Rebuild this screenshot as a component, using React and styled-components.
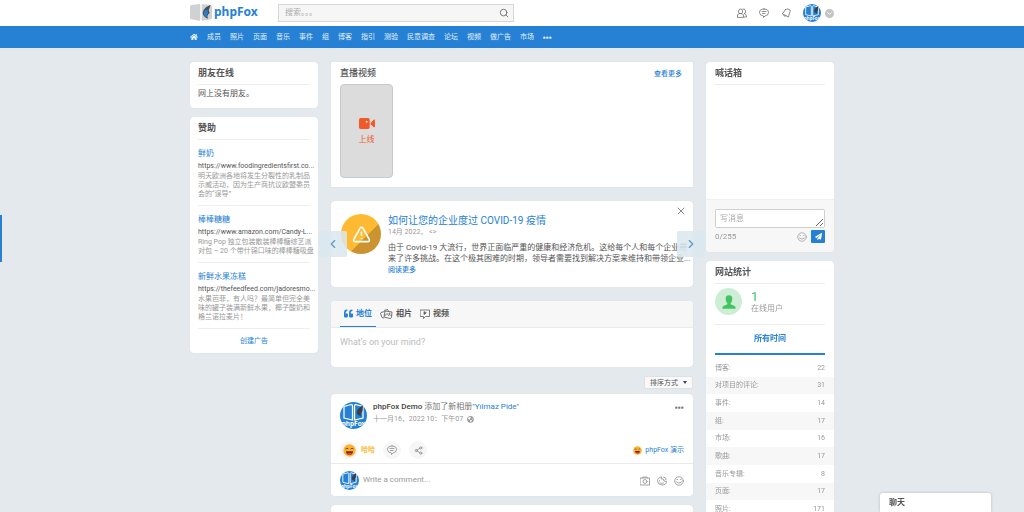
import React, { useState } from "react";
import styled, { createGlobalStyle, css } from "styled-components";
import { Search, TriangleAlert, ChevronLeft, ChevronRight, ChevronDown, X, Share2 } from "lucide-react";
import { FaHome, FaQuoteLeft, FaPaperPlane, FaGlobeAmericas } from "react-icons/fa";

const GlobalStyle = createGlobalStyle`
  * {
    box-sizing: border-box;
  }

  html {
    scrollbar-width: none;
  }

  body {
    margin: 0;
    background: #e3e9ed;
    color: #555;
    font-family: Roboto, "Noto Sans CJK SC", sans-serif;
    font-size: 8px;
    line-height: 10px;
  }

  a {
    color: #2681d5;
    text-decoration: none;
  }

  button,
  input,
  textarea {
    font: inherit;
    color: inherit;
    margin: 0;
    padding: 0;
    border: 0;
    background: none;
    outline: none;
  }

  button {
    cursor: pointer;
  }

  svg {
    display: block;
    flex: none;
  }

  h1, h2, h3, p, ul {
    margin: 0;
    padding: 0;
  }
`;

const Page = styled.div`
  height: 100vh;
  overflow: hidden;
`;

const Container = styled.div`
  display: flex;
  align-items: center;
  width: 100%;
  max-width: 644px;
  margin: 0 auto;
`;

const Header = styled.header`
  display: flex;
  height: 26px;
  background: #fff;
`;

const Logo = styled.a`
  display: flex;
  align-items: center;
  gap: 2px;
  width: 88px;
  font-family: "Noto Sans", sans-serif;
  font-size: 12px;
  font-weight: 700;
  line-height: 16px;
`;

const LogoText = styled.span`
  padding-bottom: 2px;
`;

const SearchBox = styled.form`
  display: flex;
  align-items: center;
  width: 236px;
  height: 18px;
  padding: 0 4px 0 6px;
  border: 1px solid #d6d6d6;
  background: #f6f6f6;
  color: #666;

  input {
    flex: 1;
    min-width: 0;
  }

  input::placeholder {
    color: #aaa;
  }
`;

const HeaderActions = styled.div`
  display: flex;
  align-items: center;
  gap: 12px;
  margin-left: auto;
  color: #666;
`;

const Account = styled.div`
  display: flex;
  align-items: center;
  gap: 4px;
`;

const AccountToggle = styled.button`
  display: flex;
  align-items: center;
  justify-content: center;
  width: 9px;
  height: 9px;
  border-radius: 50%;
  background: #c4c4c4 !important;
  color: #fff !important;
`;

const Nav = styled.nav`
  display: flex;
  height: 22px;
  background: #2681d5;
`;

const NavLink = styled.a`
  margin-right: 9px;
  color: #e4f0fb;
  font-size: 7px;
  white-space: nowrap;
`;

const Main = styled.main`
  display: grid;
  grid-template-columns: 128px minmax(0, 1fr) 128px;
  gap: 13px;
  align-items: start;
  width: 100%;
  max-width: 644px;
  margin: 0 auto;
  padding-top: 14px;
`;

const SideColumn = styled.div`
  display: flex;
  flex-direction: column;
  gap: 9px;
`;

const Card = styled.section`
  border-radius: ${({ $square }) => ($square ? "0" : "4px")};
  background: #fff;
  overflow: hidden;
  box-shadow: 0 0 1px rgba(0, 0, 0, 0.1);
`;

const CardBody = styled.div`
  padding: 0 ${({ $tight }) => ($tight ? "8px" : "9px")};
`;

const CardTitle = styled.h2`
  height: 23px;
  border-bottom: ${({ $plain }) => ($plain ? "0" : "1px solid #eee")};
  font-size: 9px;
  font-weight: ${({ $plain }) => ($plain ? 500 : 700)};
  line-height: 22px;
`;

const EmptyText = styled.p`
  padding: 4px 0 9px;
`;

const Ad = styled.article`
  padding: 8px 0 6px;
  border-bottom: 1px solid #eee;
  white-space: nowrap;
`;

const AdTitle = styled.h3`
  font-size: 8px;
  font-weight: 400;
  line-height: 12px;
`;

const AdUrl = styled.p`
  font-size: 7px;
  line-height: 12px;
`;

const AdText = styled.p`
  color: #999;
  font-size: 7px;
  line-height: 9px;
`;

const Line = styled.span`
  display: block;
`;

const CreateAd = styled.a`
  display: block;
  font-size: 7px;
  line-height: 24px;
  text-align: center;
`;

const LiveCard = styled(Card)`
  padding-bottom: 9px;
`;

const RowBetween = styled.div`
  display: flex;
  align-items: center;
  justify-content: space-between;
`;

const MoreLink = styled.a`
  font-size: 7px;
  font-weight: 500;
  padding-right: 2px;
`;

const LiveButton = styled.button`
  display: flex;
  flex-direction: column;
  align-items: center;
  justify-content: center;
  gap: 6px;
  width: 53px;
  height: 94px;
  margin-top: -1px;
  border: 1px solid #c9c9c9 !important;
  border-radius: 4px;
  background: #dcdcdc !important;
  color: #f05a28 !important;
`;

const Slider = styled.div`
  position: relative;
  margin-top: 14px;
`;

const Slide = styled(Card)`
  display: flex;
  gap: 7px;
  height: 86px;
  padding: 13px 0 0 10px;
`;

const SlideImage = styled.div`
  display: flex;
  align-items: center;
  justify-content: center;
  flex: none;
  width: 40px;
  height: 40px;
  border-radius: 50%;
  background: linear-gradient(135deg, #ffba34 60%, #cb9431 60%);
  color: #fff;
`;

const SlideText = styled.div`
  min-width: 0;
  line-height: 11px;
  white-space: nowrap;
`;

const SlideTitle = styled.h2`
  font-size: 10px;
  font-weight: 400;
  line-height: 13px;
`;

const SlideDate = styled.p`
  margin-bottom: 4px;
  color: #999;
  font-size: 7px;
`;

const SlideArrow = styled.button`
  position: absolute;
  top: 30px;
  ${({ $side }) => $side}: -12px;
  display: flex;
  align-items: center;
  justify-content: center;
  width: 28px;
  height: 26px;
  border-radius: 2px;
  background: rgba(219, 232, 239, 0.85) !important;
  color: #5798c4 !important;
`;

const CloseButton = styled.button`
  position: absolute;
  top: 4px;
  right: 6px;
  color: #888 !important;
`;

const Composer = styled(Card)`
  margin-top: 14px;
`;

const Tabs = styled.div`
  display: flex;
  padding: 0 9px;
  border-bottom: 1px solid #eaeaea;
  background: #f7f7f7;
`;

const Tab = styled.button`
  display: flex;
  align-items: center;
  gap: 3px;
  height: 26px;
  padding: 0 4px !important;
  border-bottom: 1px solid transparent !important;
  font-weight: 700 !important;

  ${({ $active }) =>
    $active &&
    css`
      color: #2681d5 !important;
      border-color: #2681d5 !important;
    `}
`;

const StatusInput = styled.textarea`
  display: block;
  width: 100%;
  height: 39px;
  padding: 9px !important;
  font-size: 9px !important;
  resize: none;

  &::placeholder {
    color: #bbb;
  }
`;

const SortRow = styled.div`
  display: flex;
  justify-content: flex-end;
  padding: 9px 0 5px;
`;

const SortButton = styled.button`
  display: flex;
  align-items: center;
  gap: 5px;
  height: 13px;
  padding: 0 5px !important;
  border: 1px solid #e0e0e0 !important;
  border-radius: 2px;
  background: #f9f9f9 !important;
  font-size: 7px !important;
`;

const Caret = styled.span`
  border: 2px solid transparent;
  border-top: 3px solid #444;
  border-bottom: 0;
`;

const Post = styled(Card)`
  margin-bottom: 9px;
`;

const PostHead = styled.div`
  display: flex;
  gap: 6px;
  padding: 8px 9px 0;
`;

const PostInfo = styled.div`
  flex: 1;
  color: #777;
`;

const Author = styled.strong`
  color: #444;
  font-weight: 500;
`;

const PostDate = styled.p`
  display: flex;
  align-items: center;
  gap: 4px;
  padding-top: 2px;
  color: #999;
  font-size: 7px;
`;

const PostMenu = styled.div`
  color: #777;
`;

const PostActions = styled.div`
  display: flex;
  align-items: center;
  gap: 8px;
  padding: 12px 9px 4px;
  border-bottom: 1px solid #eaeaea;
`;

const RoundButton = styled.button`
  display: flex;
  align-items: center;
  justify-content: center;
  width: 18px;
  height: 18px;
  border-radius: 50%;
  background: #f6f6f6 !important;
  color: #888 !important;
`;

const Reaction = styled.div`
  display: flex;
  align-items: center;
  gap: 3px;
  color: #ffba34;
  font-size: 7px;
  font-weight: 700;
`;

const Reactors = styled.a`
  display: flex;
  align-items: center;
  gap: 3px;
  margin-left: auto;
  font-size: 7px;
`;

const CommentBar = styled.form`
  display: flex;
  align-items: center;
  gap: 4px;
  height: 32px;
  padding: 0 9px;
  color: #888;

  input {
    flex: 1;
    min-width: 0;
  }

  input::placeholder {
    color: #999;
  }
`;

const CommentTools = styled.div`
  display: flex;
  gap: 7px;
  padding-top: 2px;
`;

const NextPost = styled(Card)`
  height: 60px;
`;

const ShoutMessages = styled.div`
  height: 114px;
`;

const ShoutForm = styled.form`
  padding: 9px 9px 9px;
  border-top: 1px solid #f0f0f0;
  background: #f7f7f7;
`;

const ShoutInput = styled.textarea`
  display: block;
  width: 100%;
  height: 19px;
  padding: 4px !important;
  border: 1px solid #d0d0d0 !important;
  border-radius: 2px;
  background: #fff !important;

  &::placeholder {
    color: #aaa;
  }
`;

const ShoutFoot = styled.div`
  display: flex;
  align-items: center;
  gap: 4px;
  padding-top: 2px;
  color: #999;
`;

const Counter = styled.span`
  flex: 1;
`;

const SendButton = styled.button`
  display: flex;
  align-items: center;
  justify-content: center;
  width: 14px;
  height: 13px;
  border-radius: 1px;
  background: #2681d5 !important;
  color: #fff !important;
`;

const Online = styled.div`
  display: flex;
  align-items: center;
  gap: 9px;
  height: 41px;
  padding-bottom: 5px;
  border-bottom: 1px solid #eee;
  color: #999;
`;

const OnlineIcon = styled.div`
  display: flex;
  align-items: center;
  justify-content: center;
  width: 27px;
  height: 27px;
  border-radius: 50%;
  background: #cdeed5;
  color: #43c463;
`;

const OnlineCount = styled.div`
  color: #43c463;
  font-size: 13px;
  line-height: 15px;
`;

const StatsTab = styled.button`
  display: block;
  width: 100%;
  height: 30px;
  border-bottom: 2px solid #2681d5 !important;
  color: #2681d5 !important;
  font-weight: 700 !important;
`;

const StatsTable = styled.table`
  width: 100%;
  height: 159px;
  margin-top: 4px;
  border-collapse: collapse;
  color: #999;
  font-size: 7px;

  tr:nth-child(even) {
    background: #f7f7f7;
  }

  th,
  td {
    padding: 0 9px;
    font-weight: 400;
    text-align: left;
  }

  td {
    text-align: right;
  }
`;

const ChatDock = styled.button`
  position: fixed;
  right: 33px;
  bottom: 0;
  width: 111px;
  height: 19px;
  padding: 0 9px !important;
  border-radius: 3px 3px 0 0;
  background: #fff !important;
  box-shadow: 0 0 3px rgba(0, 0, 0, 0.2);
  font-weight: 700 !important;
  text-align: left;
`;

const EdgeHandle = styled.div`
  position: fixed;
  top: 215px;
  left: 0;
  width: 2px;
  height: 47px;
  background: #2681d5;
`;

const navItems = [
  "成员", "照片", "页面", "音乐", "事件", "组", "博客", "指引",
  "测验", "民意调查", "论坛", "视频", "做广告", "市场",
];

const ads = [
  {
    title: "鲜奶",
    url: "https://www.foodingredientsfirst.co...",
    lines: ["明天欧洲各地将发生分裂性的乳制品", "示威活动，因为生产商抗议欧盟委员", "会的“误导”"],
  },
  {
    title: "棒棒糖糖",
    url: "https://www.amazon.com/Candy-L...",
    lines: ["Ring Pop 独立包装散装棒棒糖综艺派", "对包 – 20 个带什锦口味的棒棒糖吸盘"],
  },
  {
    title: "新鲜水果冻糕",
    url: "https://thefeedfeed.com/jadoresmo...",
    lines: ["水果芭菲，有人吗？最简单但完全美", "味的罐子装满新鲜水果，椰子酸奶和", "格兰诺拉麦片！"],
  },
];

const stats = [
  ["博客:", 22],
  ["对项目的评论:", 31],
  ["事件:", 14],
  ["组:", 17],
  ["市场:", 16],
  ["歌曲:", 17],
  ["音乐专辑:", 8],
  ["页面:", 17],
  ["照片:", 171],
];

const LogoMark = () => (
  <svg width="22" height="18" viewBox="0 0 66 54">
    <path d="M0 8Q0 4 4 3L28 0Q31 0 31 3V47Q31 51 28 50L4 46Q0 45 0 42Z" fill="#cfd1d3" />
    <path d="M66 8Q66 4 62 3L38 0Q35 0 35 3V47Q35 51 38 50L62 46Q66 45 66 42Z" fill="#cfd1d3" />
    <path d="M62 2L48 10Q38 18 38 28Q40 40 54 44Q49 34 59 27L56 19Z" fill="#474b50" />
    <path d="M52 16Q40 22 41 31Q44 38 52 41Q48 32 54 27Z" fill="#2681d5" />
  </svg>
);

const Avatar = ({ size }) => (
  <svg width={size} height={size} viewBox="0 0 54 54">
    <clipPath id={`avatar${size}`}>
      <circle cx="27" cy="27" r="27" />
    </clipPath>
    <g clipPath={`url(#avatar${size})`}>
      <rect width="54" height="54" fill="#2681d5" />
      <path d="M8 9L23 5Q25 5 25 8V36L8 32Z" fill="#2681d5" stroke="#fff" strokeWidth="2.5" />
      <path d="M29 8Q29 5 31 5L46 9V32L29 36Z" fill="#2681d5" stroke="#fff" strokeWidth="2.5" />
      <path d="M46 6L37 13Q32 18 34 24L43 30Q39 24 45 18Z" fill="#3b4046" />
      <text x="27" y="47" fill="#fff" fontFamily="Noto Sans, sans-serif" fontSize="13" fontWeight="700" textAnchor="middle">
        phpFox
      </text>
    </g>
  </svg>
);

// outline icons share the same 20 unit grid
const Outline = ({ size = 10, children }) => (
  <svg
    width={size}
    height={size}
    viewBox="0 0 20 20"
    fill="none"
    stroke="currentColor"
    strokeWidth="1.5"
    strokeLinecap="round"
    strokeLinejoin="round"
  >
    {children}
  </svg>
);

const FriendsIcon = () => (
  <Outline>
    <path d="M3 6Q3 2 7 2Q11 2 11 6V9Q11 11 7 11Q3 11 3 9Z" />
    <path d="M12 2Q17 1 17 6V9Q17 10 14 11Q19 11 19 18H14" />
    <path d="M1 18V14Q2 11 7 11Q12 11 13 14V18Z" />
  </Outline>
);

const CommentIcon = () => (
  <Outline>
    <path d="M10 2Q19 2 19 9Q19 15 12 16L9 19V16Q1 15 1 9Q1 2 10 2Z" />
    <path d="M6 7H14M7 11H12" />
  </Outline>
);

const BellIcon = () => (
  <Outline>
    <path d="M9 3Q14 0 18 4Q19 7 17 10L15 18L2 11L6 8Q7 4 9 3Z" />
    <path d="M5 14Q5 18 10 16" />
  </Outline>
);

const SmileIcon = ({ size }) => (
  <Outline size={size}>
    <circle cx="10" cy="10" r="8.5" />
    <path d="M6 7H7M13 7H14M5 12Q10 17 15 12" />
  </Outline>
);

const CameraIcon = () => (
  <Outline>
    <path d="M1 4H19V18H1ZM5 4L6 2H14L15 4" />
    <circle cx="10" cy="11" r="4" />
  </Outline>
);

const StickerIcon = () => (
  <Outline>
    <path d="M9 2Q1 3 1 10Q2 18 10 18Q19 18 19 11L14 10L13 6L9 6Z" />
    <path d="M13 2L17 4L18 8M5 9V10M6 14Q10 16 13 14" />
  </Outline>
);

const PhotosIcon = () => (
  <svg width="13" height="10" viewBox="0 0 26 20" fill="none" stroke="currentColor" strokeWidth="1.6" strokeLinejoin="round">
    <path d="M9 5L2 7L1 9L4 17L8 18M8 3L15 1L17 4" />
    <path d="M10 4L24 6L23 17Q22 19 20 19L8 16Z" />
    <path d="M9 14L14 9L17 13L20 11L23 14" />
    <circle cx="19" cy="9" r="1" />
  </svg>
);

const VideoIcon = () => (
  <Outline>
    <path d="M1 2H19V15H11L7 19V15H1Z" />
    <path d="M8 6V11L12 8Z" fill="currentColor" />
  </Outline>
);

const LiveIcon = () => (
  <svg width="16" height="11" viewBox="0 0 48 33" fill="currentColor">
    <rect width="32" height="33" rx="5" />
    <path d="M35 14L44 5Q48 4 48 8V25Q48 29 44 28L35 19Z" />
    <circle cx="23" cy="11" r="3" fill="#dcdcdc" />
  </svg>
);

const DotsIcon = () => (
  <svg width="9" height="3" viewBox="0 0 27 9" fill="currentColor">
    <circle cx="4" cy="5" r="3.5" />
    <circle cx="13" cy="5" r="3.5" />
    <circle cx="22" cy="5" r="3.5" />
  </svg>
);

const HahaIcon = ({ size }) => (
  <svg width={size} height={size} viewBox="0 0 36 36">
    <circle cx="18" cy="18" r="17" fill="#ffb22e" />
    <path d="M7 14Q11 9 15 14M21 14Q25 9 29 14" fill="none" stroke="#5a3b1d" strokeWidth="2.5" />
    <path d="M8 20H28Q27 30 18 30Q9 30 8 20Z" fill="#6d2c1f" />
    <path d="M11 27Q18 22 25 27Q22 30 18 30Q14 30 11 27Z" fill="#ee4343" />
  </svg>
);

const UserIcon = () => (
  <svg width="14" height="14" viewBox="0 0 42 42" fill="currentColor">
    <path d="M21 1Q32 1 31 13Q30 21 26 25V28L38 33Q41 35 41 41H1Q1 35 4 33L16 28V25Q12 21 11 13Q10 1 21 1Z" />
  </svg>
);

const App = () => {
  const [tab, setTab] = useState("status");
  const [shout, setShout] = useState("");

  return (
    <Page lang="zh-CN">
      <GlobalStyle />
      <Header>
        <Container>
          <Logo href="#">
            <LogoMark />
            <LogoText>phpFox</LogoText>
          </Logo>
          <SearchBox>
            <input type="search" placeholder="搜索。。。" aria-label="搜索" />
            <button type="button" aria-label="搜索">
              <Search size={10} />
            </button>
          </SearchBox>
          <HeaderActions>
            <button aria-label="好友"><FriendsIcon /></button>
            <button aria-label="消息"><CommentIcon /></button>
            <button aria-label="通知"><BellIcon /></button>
            <Account>
              <Avatar size={18} />
              <AccountToggle aria-label="账户">
                <ChevronDown size={7} strokeWidth={3} />
              </AccountToggle>
            </Account>
          </HeaderActions>
        </Container>
      </Header>
      <Nav>
        <Container>
          <NavLink href="#" aria-label="首页"><FaHome size={8} /></NavLink>
          {navItems.map((item) => (
            <NavLink href="#" key={item}>{item}</NavLink>
          ))}
          <NavLink href="#" aria-label="更多"><DotsIcon /></NavLink>
        </Container>
      </Nav>

      <Main>
        <SideColumn>
          <Card>
            <CardBody $tight>
              <CardTitle>朋友在线</CardTitle>
              <EmptyText>网上没有朋友。</EmptyText>
            </CardBody>
          </Card>
          <Card>
            <CardBody $tight>
              <CardTitle>赞助</CardTitle>
              {ads.map((ad) => (
                <Ad key={ad.title}>
                  <AdTitle><a href="#">{ad.title}</a></AdTitle>
                  <AdUrl>{ad.url}</AdUrl>
                  <AdText>
                    {ad.lines.map((line) => (
                      <Line key={line}>{line}</Line>
                    ))}
                  </AdText>
                </Ad>
              ))}
              <CreateAd href="#">创建广告</CreateAd>
            </CardBody>
          </Card>
        </SideColumn>

        <div>
          <LiveCard $square>
            <CardBody>
              <RowBetween>
                <CardTitle $plain>直播视频</CardTitle>
                <MoreLink href="#">查看更多</MoreLink>
              </RowBetween>
              <LiveButton>
                <LiveIcon />
                上线
              </LiveButton>
            </CardBody>
          </LiveCard>

          <Slider>
            <Slide>
              <SlideImage>
                <TriangleAlert size={19} />
              </SlideImage>
              <SlideText>
                <SlideTitle><a href="#">如何让您的企业度过 COVID-19 疫情</a></SlideTitle>
                <SlideDate>14月 2022， &lt;&gt;</SlideDate>
                <p>
                  <Line>由于 Covid-19 大流行，世界正面临严重的健康和经济危机。这给每个人和每个企业带</Line>
                  <Line>来了许多挑战。在这个极其困难的时期，领导者需要找到解决方案来维持和带领企业...</Line>
                </p>
                <MoreLink href="#">阅读更多</MoreLink>
              </SlideText>
            </Slide>
            <CloseButton aria-label="关闭"><X size={12} /></CloseButton>
            <SlideArrow $side="left" aria-label="上一个"><ChevronLeft size={14} /></SlideArrow>
            <SlideArrow $side="right" aria-label="下一个"><ChevronRight size={14} /></SlideArrow>
          </Slider>

          <Composer>
            <Tabs>
              <Tab $active={tab === "status"} onClick={() => setTab("status")}>
                <FaQuoteLeft size={9} />
                地位
              </Tab>
              <Tab $active={tab === "photo"} onClick={() => setTab("photo")}>
                <PhotosIcon />
                相片
              </Tab>
              <Tab $active={tab === "video"} onClick={() => setTab("video")}>
                <VideoIcon />
                视频
              </Tab>
            </Tabs>
            <StatusInput placeholder="What's on your mind?" aria-label="地位" />
          </Composer>

          <SortRow>
            <SortButton>
              排序方式
              <Caret />
            </SortButton>
          </SortRow>

          <Post>
            <PostHead>
              <Avatar size={27} />
              <PostInfo>
                <p>
                  <Author>phpFox Demo</Author> 添加了新相册"<a href="#">Yılmaz Pide</a>"
                </p>
                <PostDate>
                  十一月16，2022 10：下午07
                  <FaGlobeAmericas size={7} />
                </PostDate>
              </PostInfo>
              <PostMenu>
                <button aria-label="更多"><DotsIcon /></button>
              </PostMenu>
            </PostHead>
            <PostActions>
              <Reaction>
                <RoundButton aria-label="哈哈"><HahaIcon size={13} /></RoundButton>
                哈哈
              </Reaction>
              <RoundButton aria-label="评论"><CommentIcon /></RoundButton>
              <RoundButton aria-label="分享"><Share2 size={9} /></RoundButton>
              <Reactors href="#">
                <HahaIcon size={9} />
                phpFox 演示
              </Reactors>
            </PostActions>
            <CommentBar>
              <Avatar size={19} />
              <input placeholder="Write a comment..." aria-label="评论" />
              <CommentTools>
                <button type="button" aria-label="照片"><CameraIcon /></button>
                <button type="button" aria-label="贴纸"><StickerIcon /></button>
                <button type="button" aria-label="表情"><SmileIcon /></button>
              </CommentTools>
            </CommentBar>
          </Post>
          <NextPost />
        </div>

        <SideColumn>
          <Card>
            <CardBody>
              <CardTitle>喊话箱</CardTitle>
            </CardBody>
            <ShoutMessages />
            <ShoutForm>
              <ShoutInput
                placeholder="写消息"
                aria-label="写消息"
                maxLength={255}
                value={shout}
                onChange={(e) => setShout(e.target.value)}
              />
              <ShoutFoot>
                <Counter>{shout.length}/255</Counter>
                <SmileIcon size={10} />
                <SendButton type="button" aria-label="发送"><FaPaperPlane size={7} /></SendButton>
              </ShoutFoot>
            </ShoutForm>
          </Card>
          <Card>
            <CardBody>
              <CardTitle>网站统计</CardTitle>
              <Online>
                <OnlineIcon><UserIcon /></OnlineIcon>
                <div>
                  <OnlineCount>1</OnlineCount>
                  在线用户
                </div>
              </Online>
              <StatsTab>所有时间</StatsTab>
            </CardBody>
            <StatsTable>
              <tbody>
                {stats.map(([name, count]) => (
                  <tr key={name}>
                    <th scope="row">{name}</th>
                    <td>{count}</td>
                  </tr>
                ))}
              </tbody>
            </StatsTable>
          </Card>
        </SideColumn>
      </Main>

      <EdgeHandle />
      <ChatDock>聊天</ChatDock>
    </Page>
  );
};

export default App;
